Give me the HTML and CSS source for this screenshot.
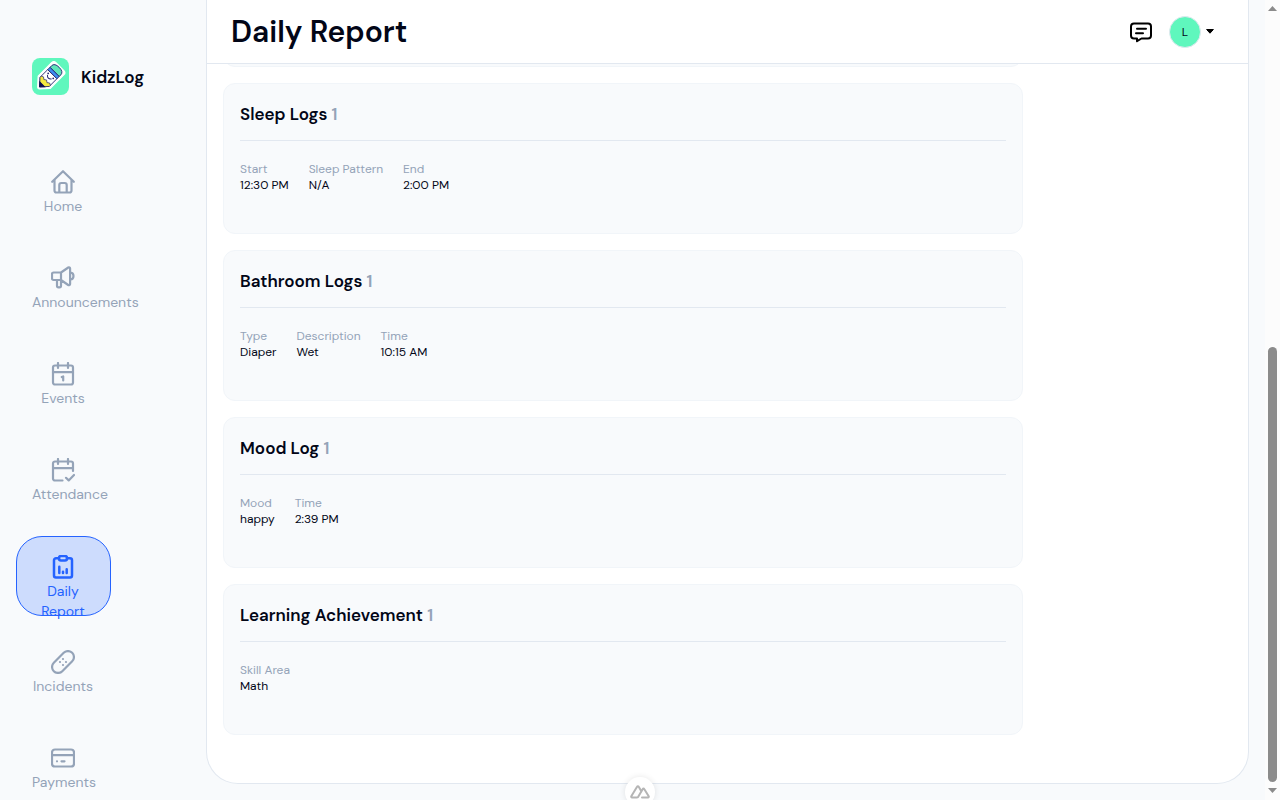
FILE: index.html
```html
<!DOCTYPE html>
<html lang="en">
<head>
    <meta charset="UTF-8">
    <meta name="viewport" content="width=device-width, initial-scale=1.0">
    <title>KidzLog - Daily Report</title>
    <link rel="stylesheet" href="styles.css">
</head>
<body>
    <div class="app">
        <aside class="sidebar">
            <a href="#" class="brand">
                <svg class="brand-logo" viewBox="0 0 37 37">
                    <rect width="37" height="37" rx="8" fill="#5ff7bd"/>
                    <g transform="translate(18 18.500) rotate(45) scale(1.080)">
                        <path d="M-5.500-13h11Q8-13 8-10V7.500L1.200 15q-1.200 1.300-2.400 0L-8 7.500V-10q0-3 2.500-3z" fill="#fff" stroke="#fff" stroke-width="1" stroke-linejoin="round"/>
                        <path d="M-6-6v-2q0-4 6-4t6 4v2z" fill="#5ee5b9" stroke="#20206b" stroke-width=".8"/>
                        <path d="M-6-6H6v3H-6z" fill="#3d8df0" stroke="#20206b" stroke-width=".8"/>
                        <path d="M-6-3H6V7L0 13.500-6 7z" fill="#fff" stroke="#20206b" stroke-width=".8"/>
                        <path d="M-6 5.500l2-1 2 1.500 2-1.500 2 1.500 2-1.500 2 1V7L0 13.500-6 7z" fill="#f5e83e" stroke="#20206b" stroke-width=".6"/>
                        <path d="M-3 10.300h6L0 13.500z" fill="#0b0b4f" stroke="#0b0b4f"/>
                        <path d="M-2.500.8q2.500 2.800 5 0" fill="none" stroke="#20206b" stroke-width=".9" stroke-linecap="round"/>
                        <circle cx="-3.300" cy="-.9" r=".8" fill="#20206b"/>
                        <circle cx="3.300" cy="-.9" r=".8" fill="#20206b"/>
                    </g>
                </svg>
                <span class="brand-name">KidzLog</span>
            </a>

            <nav class="nav">
                <a href="#" class="nav-item">
                    <svg class="nav-icon" viewBox="0 0 24 24"><path d="M1.200 11.800 12 1.200l10.800 10.600M3.500 10v10.500a2 2 0 0 0 2 2h13a2 2 0 0 0 2-2V10M8.300 22.500v-7.500a2 2 0 0 1 2-2h3.400a2 2 0 0 1 2 2v7.500"/></svg>
                    <span class="nav-label">Home</span>
                </a>
                <a href="#" class="nav-item">
                    <svg class="nav-icon" viewBox="0 0 24 24"><path d="M10 6.500H2.500A1.500 1.500 0 0 0 1 8v4.500A1.500 1.500 0 0 0 2.500 14H10M10 6.500V14M10 6.500l7.300-5a1.200 1.200 0 0 1 1.800 1v15.500a1.200 1.200 0 0 1-1.900 1L10 14M19.500 6.500c1.800.2 3 1.500 3 3.500s-1.200 3.300-3 3.500M6 14v5.800a1.500 1.500 0 0 0 1.500 1.500h1A1.500 1.500 0 0 0 10 19.800V14"/></svg>
                    <span class="nav-label">Announcements</span>
                </a>
                <a href="#" class="nav-item">
                    <svg class="nav-icon" viewBox="0 0 24 24"><rect x="2" y="3.500" width="20" height="19" rx="2"/><path d="M2 10.200h20M7 1v5M17 1v5M10.800 15l1.400-.6V18.500"/></svg>
                    <span class="nav-label">Events</span>
                </a>
                <a href="#" class="nav-item">
                    <svg class="nav-icon" viewBox="0 0 24 24"><path d="M11.500 22.500H4a2 2 0 0 1-2-2v-15a2 2 0 0 1 2-2h16a2 2 0 0 1 2 2v7.500M2 10.200h20M7 1v5M17 1v5M15 19.800l2.700 2.600L23 17"/></svg>
                    <span class="nav-label">Attendance</span>
                </a>
                <a href="#" class="nav-item active">
                    <svg class="nav-icon" viewBox="0 0 24 24"><path d="M8 3.200H5a2 2 0 0 0-2 2v15.300a2 2 0 0 0 2 2h14a2 2 0 0 0 2-2V5.200a2 2 0 0 0-2-2h-3"/><rect x="8" y="1" width="8" height="4.500" rx="2"/><path d="M8.300 11.800v6.200M12 16.800v1.200M15.700 14.300v3.700"/></svg>
                    <span class="nav-label">Daily Report</span>
                </a>
                <a href="#" class="nav-item">
                    <svg class="nav-icon" viewBox="0 0 24 24"><rect x="-1" y="6" width="26" height="12" rx="6" transform="rotate(-45 12 12)"/><path d="M12 9v.01M15 12v.01M9 12v.01M12 15v.01"/></svg>
                    <span class="nav-label">Incidents</span>
                </a>
                <a href="#" class="nav-item">
                    <svg class="nav-icon" viewBox="0 0 24 24"><rect x="1" y="3.500" width="22" height="17" rx="3"/><path d="M1 9.200h22M6 15.300v.01M10.500 15.300h3"/></svg>
                    <span class="nav-label">Payments</span>
                </a>
            </nav>
        </aside>

        <main class="panel">
            <header class="topbar">
                <h1 class="page-title">Daily Report</h1>
                <div class="topbar-actions">
                    <button type="button" class="icon-btn" aria-label="Messages">
                        <svg class="chat-icon" viewBox="0 0 24 24"><path d="M5 3.500h14a3 3 0 0 1 3 3v9a3 3 0 0 1-3 3h-6.500L8 21.200v-2.700H5a3 3 0 0 1-3-3v-9a3 3 0 0 1 3-3zM8 8.800h9M7 13.200h7"/></svg>
                    </button>
                    <button type="button" class="account-btn" aria-label="Account">
                        <span class="avatar">L</span>
                        <svg class="caret" viewBox="0 0 8 5"><path d="M.6.5h6.800L4 4.200z"/></svg>
                    </button>
                </div>
            </header>

            <div class="report">
                <section class="card card-previous"></section>

                <section class="card">
                    <h2 class="card-title">Sleep Logs <span class="count">1</span></h2>
                    <dl class="fields">
                        <div><dt>Start</dt><dd>12:30 PM</dd></div>
                        <div><dt>Sleep Pattern</dt><dd>N/A</dd></div>
                        <div><dt>End</dt><dd>2:00 PM</dd></div>
                    </dl>
                </section>

                <section class="card">
                    <h2 class="card-title">Bathroom Logs <span class="count">1</span></h2>
                    <dl class="fields">
                        <div><dt>Type</dt><dd>Diaper</dd></div>
                        <div><dt>Description</dt><dd>Wet</dd></div>
                        <div><dt>Time</dt><dd>10:15 AM</dd></div>
                    </dl>
                </section>

                <section class="card">
                    <h2 class="card-title">Mood Log <span class="count">1</span></h2>
                    <dl class="fields">
                        <div><dt>Mood</dt><dd>happy</dd></div>
                        <div><dt>Time</dt><dd>2:39 PM</dd></div>
                    </dl>
                </section>

                <section class="card">
                    <h2 class="card-title">Learning Achievement <span class="count">1</span></h2>
                    <dl class="fields">
                        <div><dt>Skill Area</dt><dd>Math</dd></div>
                    </dl>
                </section>
            </div>
        </main>

        <div class="scrollbar">
            <svg class="scroll-arrow" viewBox="0 0 15 16"><path d="M3 11h9L7.500 6z"/></svg>
            <div class="scroll-thumb"></div>
            <svg class="scroll-arrow" viewBox="0 0 15 16"><path d="M3 4h9L7.500 9z"/></svg>
        </div>
    </div>

    <button type="button" class="devtools-btn" aria-label="Toggle devtools">
        <svg viewBox="0 0 20 14"><path d="M12 12.500h6a.8.8 0 0 0 .7-1.200l-4.500-7.400a.8.8 0 0 0-1.400 0L8.500 11.300a1.800 1.800 0 0 1-1.600 1.200H2a.8.8 0 0 1-.7-1.200L7.200 1.600a.8.8 0 0 1 1.400 0l2.700 4.600"/></svg>
    </button>
</body>
</html>
```

FILE: styles.css
```css
:root {
    --ink: #020617;
    --muted: #94a3b8;
    --line: #e2e8f0;
    --line-light: #f1f5f9;
    --surface: #f8fafc;
    --primary: #2563ff;
    --mint: #5ff7bd;
}

* {
    margin: 0;
    padding: 0;
    box-sizing: border-box;
}

body {
    font-family: "DM Sans", Inter, sans-serif;
    background-color: var(--surface);
    color: var(--ink);
}

a {
    color: inherit;
    text-decoration: none;
}

button {
    background: none;
    border: none;
    font: inherit;
    color: inherit;
    cursor: pointer;
}

.app {
    display: flex;
    align-items: flex-start;
    height: 100vh;
    overflow: hidden;
}

/* Sidebar */
.sidebar {
    flex: 0 0 206px;
    padding: 58px 16px 0;
}

.brand {
    display: flex;
    align-items: center;
    gap: 12px;
    padding-left: 16px;
    margin-bottom: 57px;
}

.brand-logo {
    width: 37px;
    height: 37px;
}

.brand-name {
    font-size: 17px;
    line-height: 24px;
    font-weight: 600;
}

.nav {
    display: flex;
    flex-direction: column;
    gap: 16px;
}

.nav-item {
    width: 95px;
    height: 80px;
    padding: 18px 17px 0 16px;
    border-radius: 26px;
    color: var(--muted);
    font-size: 14px;
    line-height: 20px;
    text-align: center;
}

.nav-item.active {
    padding: 18px 16px 0 15px;
    border: 1px solid var(--primary);
    background-color: #cddcfd;
    color: var(--primary);
}

.nav-icon {
    display: block;
    width: 24px;
    height: 24px;
    margin: 0 auto 2px;
    fill: none;
    stroke: currentColor;
    stroke-width: 2.2;
    stroke-linecap: round;
    stroke-linejoin: round;
}

.nav-item.active .nav-icon {
    stroke-width: 2.5;
}

.nav-label {
    display: block;
}

/* Main panel */
.panel {
    flex: 1;
    min-width: 0;
    margin-right: 16px;
    background-color: #fff;
    border: 1px solid var(--line);
    border-top: none;
    border-radius: 0 0 32px 32px;
}

.topbar {
    position: relative;
    z-index: 1;
    display: flex;
    align-items: center;
    justify-content: space-between;
    height: 64px;
    padding: 0 34px 0 24px;
    background-color: #fff;
    border-bottom: 1px solid var(--line);
}

.page-title {
    font-size: 30px;
    line-height: 40px;
    font-weight: 600;
}

.topbar-actions {
    display: flex;
    align-items: center;
    gap: 16px;
}

.icon-btn,
.account-btn {
    display: flex;
    align-items: center;
}

.chat-icon {
    width: 24px;
    height: 24px;
    fill: none;
    stroke: #000;
    stroke-width: 2;
    stroke-linecap: round;
    stroke-linejoin: round;
}

.account-btn {
    gap: 5px;
}

.avatar {
    width: 32px;
    height: 32px;
    border: 1px solid var(--line);
    border-radius: 50%;
    background-color: var(--mint);
    font-size: 12px;
    line-height: 30px;
    text-align: center;
}

.caret {
    width: 8px;
    height: 5px;
    stroke: #000;
    stroke-linejoin: round;
}

.report {
    display: flex;
    flex-direction: column;
    gap: 16px;
    max-width: 832px;
    padding: 0 16px 48px;
}

.card {
    min-height: 151px;
    padding: 16px;
    background-color: var(--surface);
    border: 1px solid var(--line-light);
    border-radius: 12px;
}

/* Scrolled up behind the top bar */
.card-previous {
    margin-top: -148px;
}

.card-title {
    padding-bottom: 12px;
    border-bottom: 1px solid var(--line);
    font-size: 17px;
    line-height: 28px;
    font-weight: 600;
}

.count {
    color: var(--muted);
}

.fields {
    display: flex;
    gap: 20px;
    padding-top: 20px;
    font-size: 12px;
    line-height: 16px;
}

.fields dt {
    color: var(--muted);
}

/* Scrollbar */
.scrollbar {
    flex: 0 0 15px;
    display: flex;
    flex-direction: column;
    height: 100%;
    background-color: #fcfcfc;
}

.scroll-arrow {
    width: 15px;
    height: 16px;
    fill: #8b8b8b;
}

.scroll-thumb {
    width: 9px;
    height: 435px;
    margin: auto 3px 2px;
    border-radius: 5px;
    background-color: #8b8b8b;
}

.devtools-btn {
    position: fixed;
    bottom: -7px;
    left: 50%;
    z-index: 2;
    display: flex;
    align-items: center;
    justify-content: center;
    width: 30px;
    height: 30px;
    margin-left: -15px;
    border-radius: 50%;
    background-color: #fff;
    box-shadow: 0 0 6px rgba(0, 0, 0, 0.1);
}

.devtools-btn svg {
    width: 20px;
    height: 14px;
    fill: none;
    stroke: #b5b5b5;
    stroke-width: 2;
    stroke-linecap: round;
    stroke-linejoin: round;
}
```
